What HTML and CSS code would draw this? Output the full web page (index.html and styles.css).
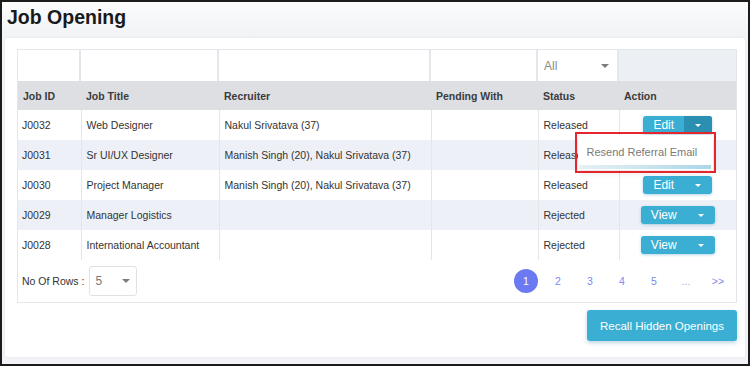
FILE: index.html
```html
<!DOCTYPE html>
<html>
<head>
<meta charset="utf-8">
<title>Job Opening</title>
<link rel="stylesheet" href="styles.css">
</head>
<body>
<div class="page">
  <h1 class="title">Job Opening</h1>
  <div class="card">
    <div class="grid-wrap">
      <table class="grid">
        <colgroup>
          <col class="c-id"><col class="c-title"><col class="c-rec"><col class="c-pend"><col class="c-status"><col class="c-action">
        </colgroup>
        <thead>
          <tr class="filters">
            <td><div class="fbox"></div></td>
            <td><div class="fbox"></div></td>
            <td><div class="fbox"></div></td>
            <td><div class="fbox"></div></td>
            <td><div class="fbox fselect"><span>All</span><span class="caret-gray"></span></div></td>
            <td class="fempty"></td>
          </tr>
          <tr class="heads">
            <th>Job ID</th><th>Job Title</th><th>Recruiter</th><th>Pending With</th><th>Status</th><th>Action</th>
          </tr>
        </thead>
        <tbody>
          <tr>
            <td>J0032</td><td>Web Designer</td><td>Nakul Srivatava (37)</td><td></td><td>Released</td>
            <td class="act">
              <div class="split"><span class="split-main">Edit</span><span class="split-caret open"><span class="caret-white"></span></span></div>
              <div class="menu">Resend Referral Email</div>
            </td>
          </tr>
          <tr>
            <td>J0031</td><td>Sr UI/UX Designer</td><td>Manish Singh (20), Nakul Srivatava (37)</td><td></td><td>Released</td>
            <td class="act"></td>
          </tr>
          <tr>
            <td>J0030</td><td>Project Manager</td><td>Manish Singh (20), Nakul Srivatava (37)</td><td></td><td>Released</td>
            <td class="act">
              <div class="split"><span class="split-main">Edit</span><span class="split-caret"><span class="caret-white"></span></span></div>
            </td>
          </tr>
          <tr>
            <td>J0029</td><td>Manager Logistics</td><td></td><td></td><td>Rejected</td>
            <td class="act">
              <div class="split"><span class="split-main">View</span><span class="split-caret"><span class="caret-white"></span></span></div>
            </td>
          </tr>
          <tr>
            <td>J0028</td><td>International Accountant</td><td></td><td></td><td>Rejected</td>
            <td class="act">
              <div class="split"><span class="split-main">View</span><span class="split-caret"><span class="caret-white"></span></span></div>
            </td>
          </tr>
        </tbody>
      </table>
      <div class="foot">
        <span class="rows-label">No Of Rows :</span>
        <div class="rsel"><span>5</span><span class="caret-gray"></span></div>
        <div class="pager">
          <span class="pg"><span class="pg-current">1</span></span>
          <span class="pg">2</span>
          <span class="pg">3</span>
          <span class="pg">4</span>
          <span class="pg">5</span>
          <span class="pg pg-dots">...</span>
          <span class="pg">&gt;&gt;</span>
        </div>
      </div>
    </div>
    <div class="actions">
      <button class="btn-recall">Recall Hidden Openings</button>
    </div>
  </div>
</div>
</body>
</html>
```

FILE: styles.css
```css
* { box-sizing: border-box; }
html, body { margin: 0; padding: 0; }
body {
  width: 750px;
  height: 366px;
  overflow: hidden;
  border: 2px solid #1b1b1b;
  background: linear-gradient(#fcfcfd, #f1f3f6 36px);
  font-family: "Liberation Sans", Arial, sans-serif;
  color: #333;
}
.page { height: 100%; display: flex; flex-direction: column; }
.title {
  margin: 0;
  height: 36px;
  padding: 4px 0 0 5px;
  font-size: 19.5px;
  line-height: 23px;
  font-weight: bold;
  color: #1a1a1a;
}
.card {
  margin: 0 3px;
  background: #fff;
  padding: 11px 8px 16px 12px;
  border-radius: 2px;
  box-shadow: 0 0 2px rgba(0,0,0,0.08);
}
.grid-wrap { border: 1px solid #e3e6ea; }
.grid {
  width: 718px;
  table-layout: fixed;
  border-collapse: collapse;
  border-spacing: 0;
}
.c-id { width: 63px; }
.c-title { width: 138px; }
.c-rec { width: 212px; }
.c-pend { width: 107px; }
.c-status { width: 81px; }
.c-action { width: 117px; }

.filters td {
  height: 31px;
  padding: 0 2px 0 0;
  background: #e3e6ea;
}
.filters td.fempty { background: #eceff3; padding: 0; }
.fbox { height: 31px; background: #fff; }
.fselect {
  display: flex;
  align-items: center;
  justify-content: space-between;
  padding: 0 8px 0 6px;
  font-size: 12px;
  color: #8a8a8a;
}
.caret-gray {
  width: 0; height: 0;
  border-left: 4px solid transparent;
  border-right: 4px solid transparent;
  border-top: 4px solid #7d7d7d;
}
.heads th {
  height: 29px;
  background: #dddfe3;
  text-align: left;
  padding: 0 5px;
  font-size: 10.5px;
  font-weight: bold;
  color: #3b3b3b;
}
tbody td {
  height: 30px;
  padding: 0 5px;
  font-size: 10.5px;
  color: #333;
  border-left: 1px solid #e4e6ea;
  white-space: nowrap;
}
tbody td:first-child { border-left: none; padding-left: 4px; }
tbody tr:nth-child(even) td { background: #eef0f8; }

.act { text-align: center; position: relative; padding: 0; }
.split {
  display: inline-flex;
  height: 18px;
  border-radius: 3px;
  overflow: hidden;
  background: #3aaed3;
  box-shadow: 0 1px 3px rgba(40,140,180,0.35);
  vertical-align: middle;
}
.split-main {
  padding: 0 10px;
  font-size: 12px;
  line-height: 18px;
  color: #fff;
}
.split-caret {
  width: 28px;
  display: flex;
  align-items: center;
  justify-content: center;
}
.split-caret.open { background: #2b8fb1; }
.caret-white {
  width: 0; height: 0;
  border-left: 3.5px solid transparent;
  border-right: 3.5px solid transparent;
  border-top: 3.5px solid #fff;
}
.menu {
  position: absolute;
  left: -42px;
  top: 25px;
  width: 135px;
  height: 35px;
  background: #fff;
  text-align: left;
  padding: 11px 0 0 9px;
  font-size: 11px;
  line-height: 13px;
  color: #7a7a7a;
  box-shadow: 0 3px 6px rgba(0,0,0,0.1);
  outline: 2px solid #e3272d;
  outline-offset: 1px;
  z-index: 5;
}
.menu::after {
  content: "";
  position: absolute;
  left: 1px;
  right: 2px;
  bottom: 1px;
  height: 4px;
  background: linear-gradient(to right, #e6f0f4, #cfe6ef 45%, #a9d6e8);
}

.foot {
  height: 42px;
  display: flex;
  align-items: center;
  padding: 0 2px 0 4px;
  background: #fff;
}
.rows-label { font-size: 10.5px; color: #333; }
.rsel {
  margin-left: 5px;
  width: 48px;
  height: 30px;
  border: 1px solid #dfe1e5;
  border-radius: 3px;
  display: flex;
  align-items: center;
  justify-content: space-between;
  padding: 0 6px 0 5px;
  font-size: 12px;
  color: #777;
}
.pager { margin-left: auto; display: flex; align-items: center; }
.pg {
  width: 32px;
  display: flex;
  align-items: center;
  justify-content: center;
  font-size: 10.5px;
  color: #7d89ee;
}
.pg-dots { color: #a8b0e6; }
.pg-current {
  width: 24px;
  height: 24px;
  border-radius: 50%;
  background: #6c7af2;
  color: #fff;
  display: flex;
  align-items: center;
  justify-content: center;
}
.actions { display: flex; justify-content: flex-end; margin-top: 7px; }
.btn-recall {
  width: 150px;
  height: 31px;
  border: none;
  border-radius: 3px;
  background: #3aaed3;
  color: #fff;
  font-family: "Liberation Sans", Arial, sans-serif;
  font-size: 11.5px;
  box-shadow: 0 2px 4px rgba(30,120,160,0.3);
  padding: 0;
}
```
